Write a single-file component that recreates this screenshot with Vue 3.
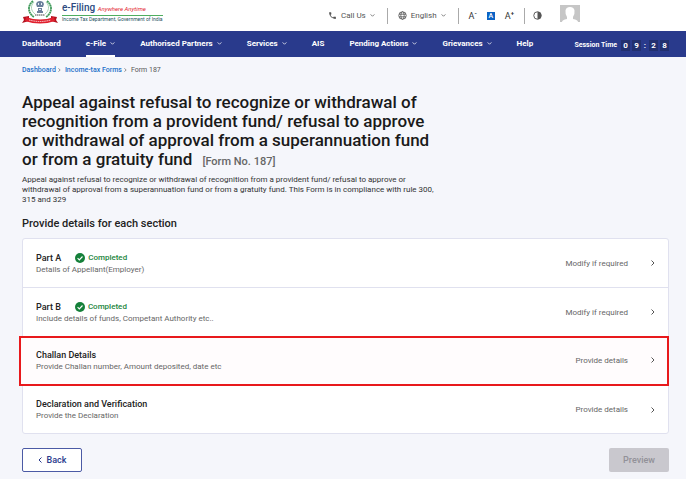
<template>
    <div class="page">
        <header class="topbar">
            <a href="#" class="brand">
                <svg class="emblem" viewBox="0 0 36 24" aria-hidden="true">
                    <path d="M11 1C5 6 6 13 12 17" fill="none" stroke="#3f9a5a" stroke-width="1.8" stroke-dasharray="2 .4" />
                    <path d="M25 1c6 5 5 12-1 16" fill="none" stroke="#3f9a5a" stroke-width="1.8" stroke-dasharray="2 .4" />
                    <path d="M12 2c-4 4-3 9 1 12M24 2c4 4 3 9-1 12" fill="none" stroke="#a9d3b4" stroke-width="1" />
                    <path d="M15 2q3-2 6 0l1 2-1 3h-6l-1-3zM16 8h4v3h-4zM15 11h6v2h-6z" fill="#6b7f9c" />
                    <path d="M16 3h1v2h-1zM19 3h1v2h-1zM17 9h2v1h-2z" fill="#e8edf3" />
                    <path d="M13 15h10" stroke="#444" stroke-width="1" stroke-dasharray="1.5 .5" />
                    <path d="M1 17l6-1v5l-7 2 2-3zM35 17l-6-1v5l7 2-2-3z" fill="#b3121f" />
                    <path d="M4 17q14 5 28 0l1 4q-15 5-30 0z" fill="#e01f2d" />
                    <path d="M7 20q11 3 22 0" fill="none" stroke="#fff" stroke-width=".8" stroke-dasharray="1.5 .7" />
                </svg>
                <span class="brand-text">
                    <span class="brand-name">e-Filing <em>Anywhere Anytime</em></span>
                    <span class="brand-dept">Income Tax Department, Government of India</span>
                </span>
            </a>

            <div class="tools">
                <button class="tool call">
                    <svg class="icon" viewBox="0 0 24 24"><path d="M6.6 10.8c1.4 2.8 3.8 5.1 6.6 6.6l2.2-2.2c.3-.3.7-.4 1-.2 1.1.4 2.3.6 3.6.6.6 0 1 .4 1 1V20c0 .6-.4 1-1 1C10.6 21 3 13.4 3 4c0-.6.4-1 1-1h3.5c.6 0 1 .4 1 1 0 1.2.2 2.5.6 3.6.1.3 0 .7-.2 1z" fill="currentColor" /></svg>
                    <span>Call Us</span>
                    <svg class="caret" viewBox="0 0 6 4"><path d="M.5.5L3 3 5.5.5" /></svg>
                </button>
                <button class="tool language">
                    <svg class="icon" viewBox="0 0 24 24" fill="none" stroke="currentColor" stroke-width="2.2"><circle cx="12" cy="12" r="10" /><ellipse cx="12" cy="12" rx="4.5" ry="10" /><path d="M3 8.5h18M3 15.5h18" /></svg>
                    <span>English</span>
                    <svg class="caret" viewBox="0 0 6 4"><path d="M.5.5L3 3 5.5.5" /></svg>
                </button>
                <div class="font-tools">
                    <button class="size" aria-label="Decrease text size">A<sup>-</sup></button>
                    <button class="size active" aria-label="Normal text size">A</button>
                    <button class="size" aria-label="Increase text size">A<sup>+</sup></button>
                </div>
                <button class="tool contrast" aria-label="Contrast">
                    <svg class="icon" viewBox="0 0 24 24"><circle cx="12" cy="12" r="10" fill="none" stroke="currentColor" stroke-width="2.5" /><path d="M12 2a10 10 0 0 1 0 20z" fill="currentColor" /></svg>
                </button>
                <button class="avatar" aria-label="Profile">
                    <svg viewBox="0 0 20 17"><path d="M0 0h20v17H0z" fill="#c6c6c6" /><path d="M2 17q0-2 5-3v-2Q5 9 5.5 5.5 6 2 10 2t4.5 3.5Q15 9 13 12v2q5 1 5 3z" fill="#fff" /></svg>
                </button>
            </div>
        </header>

        <nav class="navbar">
            <a v-for="item in menu" :key="item.label" href="#" class="nav-link" :class="{ current: item.current }">
                {{ item.label }}
                <svg v-if="item.sub" class="caret" viewBox="0 0 6 4"><path d="M.5.5L3 3 5.5.5" /></svg>
            </a>
            <div class="session">
                <span class="session-label">Session Time</span>
                <span class="digit">0</span>
                <span class="digit">9</span>
                <span class="colon">:</span>
                <span class="digit">2</span>
                <span class="digit">8</span>
            </div>
        </nav>

        <main class="content">
            <div class="breadcrumb">
                <a href="#">Dashboard</a>
                <svg class="crumb-arrow" viewBox="0 0 4 6"><path d="M.5.5L3 3 .5 5.5" /></svg>
                <a href="#">Income-tax Forms</a>
                <svg class="crumb-arrow" viewBox="0 0 4 6"><path d="M.5.5L3 3 .5 5.5" /></svg>
                <span>Form 187</span>
            </div>

            <h1>
                Appeal against refusal to recognize or withdrawal of recognition from a provident fund/
                refusal to approve or withdrawal of approval from a superannuation fund
                <span>or from a gratuity fund</span>
                <small>[Form No. 187]</small>
            </h1>
            <p class="description">
                Appeal against refusal to recognize or withdrawal of recognition from a provident fund/ refusal to approve or<br>
                withdrawal of approval from a superannuation fund or from a gratuity fund. This Form is in compliance with rule 300,<br>
                315 and 329
            </p>

            <h2>Provide details for each section</h2>

            <div class="sections">
                <a v-for="section in sections" :key="section.title" href="#" class="section" :class="{ highlight: section.highlight }">
                    <div class="section-info">
                        <div class="section-head">
                            <h3>{{ section.title }}</h3>
                            <span v-if="section.done" class="status">
                                <svg viewBox="0 0 10 10"><circle cx="5" cy="5" r="5" fill="#15803a" /><path d="M2.6 5.2l1.7 1.7 3.2-3.4" fill="none" stroke="#fff" stroke-width="1.1" /></svg>
                                Completed
                            </span>
                        </div>
                        <p>{{ section.text }}</p>
                    </div>
                    <span class="section-action">{{ section.done ? 'Modify if required' : 'Provide details' }}</span>
                    <svg class="chevron" viewBox="0 0 4 6"><path d="M.5.5L3 3 .5 5.5" /></svg>
                </a>
            </div>

            <div class="actions">
                <button class="back-btn">
                    <svg viewBox="0 0 4 6"><path d="M3.5.5L1 3l2.5 2.5" /></svg>
                    Back
                </button>
                <button class="preview-btn" disabled>Preview</button>
            </div>
        </main>
    </div>
</template>

<script setup>
    import { ref } from 'vue';

    const menu = [
        { label: 'Dashboard' },
        { label: 'e-File', sub: true, current: true },
        { label: 'Authorised Partners', sub: true },
        { label: 'Services', sub: true },
        { label: 'AIS' },
        { label: 'Pending Actions', sub: true },
        { label: 'Grievances', sub: true },
        { label: 'Help' }
    ];

    const sections = ref([
        { title: 'Part A', text: 'Details of Appellant(Employer)', done: true },
        { title: 'Part B', text: 'Include details of funds, Competant Authority etc..', done: true },
        { title: 'Challan Details', text: 'Provide Challan number, Amount deposited, date etc', highlight: true },
        { title: 'Declaration and Verification', text: 'Provide the Declaration' }
    ]);
</script>

<style>
    body {
        margin: 0;
        background: #f5f6fb;
    }
</style>

<style scoped>
    * {
        box-sizing: border-box;
    }

    .page {
        font-family: Roboto, "Liberation Sans", sans-serif;
        font-size: 8px;
        color: #222;
    }

    a {
        text-decoration: none;
    }

    button {
        font-family: inherit;
        border: none;
        background: none;
        padding: 0;
        cursor: pointer;
    }

    h1, h2, h3, p {
        margin: 0;
        font-weight: 500;
    }

    .topbar {
        display: flex;
        justify-content: space-between;
        height: 31px;
        padding: 0 106px 0 22px;
        background: #fff;
    }

    .brand {
        display: flex;
        gap: 4px;
    }

    .emblem {
        width: 36px;
        height: 24px;
    }

    .brand-text {
        display: flex;
        flex-direction: column;
        padding-top: 2px;
    }

    .brand-name {
        font-size: 10px;
        line-height: 12px;
        font-weight: 500;
        color: #2b4a80;
        border-bottom: 1px solid #4fae5f;
        white-space: nowrap;
    }

        .brand-name em {
            font-size: 6px;
            font-weight: 400;
            color: #e3262f;
        }

    .brand-dept {
        font-size: 5px;
        line-height: 7px;
        font-weight: 400;
        color: #1f5262;
        white-space: nowrap;
    }

    .tools {
        display: flex;
        align-items: center;
        color: #555;
    }

    .tool {
        display: flex;
        align-items: center;
        gap: 4px;
        height: 16px;
        font-size: 8px;
        color: #555;
        white-space: nowrap;
    }

    .icon {
        width: 9px;
        height: 9px;
    }

    .caret {
        width: 5px;
        height: 3px;
        fill: none;
        stroke: currentColor;
    }

    .call {
        padding-right: 12px;
        border-right: 1px solid #aaa;
    }

    .language {
        padding: 0 12px 0 10px;
        border-right: 1px solid #aaa;
    }

    .font-tools {
        display: flex;
        align-items: center;
        gap: 10px;
        height: 16px;
        padding: 0 10px;
        border-right: 1px solid #aaa;
    }

    .size {
        font-size: 9px;
        line-height: 8px;
        color: #333;
    }

        .size sup {
            font-size: 6px;
            font-weight: 700;
            line-height: 4px;
        }

        .size.active {
            width: 8px;
            font-size: 7px;
            font-weight: 500;
            background: #0b63c4;
            color: #fff;
        }

    .contrast {
        padding: 0 18px 0 8px;
    }

    .avatar {
        align-self: flex-start;
        padding-top: 5px;
    }

        .avatar svg {
            display: block;
            width: 20px;
            height: 17px;
        }

    .navbar {
        display: flex;
        align-items: stretch;
        gap: 25px;
        height: 26px;
        padding: 0 17px 0 22px;
        background: #293a8c;
        color: #fff;
    }

    .nav-link {
        display: flex;
        align-items: center;
        gap: 4px;
        border-bottom: 2px solid transparent;
        color: #fff;
        font-weight: 700;
        white-space: nowrap;
    }

        .nav-link.current {
            border-bottom-color: #fff;
        }

    .session {
        display: flex;
        align-items: center;
        gap: 2px;
        margin-left: auto;
        padding-top: 2px;
        font-weight: 700;
        white-space: nowrap;
    }

    .session-label {
        margin-right: 2px;
        font-size: 7px;
    }

    .digit {
        width: 9px;
        line-height: 11px;
        background: #22306f;
        text-align: center;
    }

    .colon {
        width: 4px;
        text-align: center;
    }

    .content {
        padding: 8px 17px 7px 22px;
    }

    .breadcrumb {
        display: flex;
        align-items: center;
        line-height: 10px;
        font-size: 7px;
        color: #555;
    }

        .breadcrumb a {
            color: #1b6fc9;
            font-weight: 500;
        }

    .crumb-arrow, .chevron {
        width: 4px;
        height: 6px;
        fill: none;
        stroke: #555;
    }

    .crumb-arrow {
        width: 3px;
        height: 4px;
        margin: 0 4px 0 2px;
    }

    h1 {
        max-width: 420px;
        margin-top: 18px;
        font-size: 17px;
        line-height: 19px;
        color: #1a1a1a;
    }

        h1 small {
            margin-left: 10px;
            font-size: 11px;
            color: #666;
        }

    .description {
        margin-top: 4px;
        font-size: 8px;
        line-height: 10px;
        font-weight: 400;
        color: #333;
        white-space: nowrap;
    }

    h2 {
        margin-top: 12px;
        font-size: 11px;
        line-height: 13px;
    }

    .sections {
        margin-top: 8px;
        border: 1px solid #e0e1ef;
        border-radius: 3px;
        background: #fff;
    }

    .section {
        display: flex;
        align-items: center;
        height: 48px;
        padding: 0 13px;
        color: #222;
    }

        .section + .section {
            height: 49px;
            border-top: 1px solid #e0e1ef;
        }

        .section + .section.highlight {
            height: 50px;
            margin: 0 -1px 0 -4px;
            padding: 0 12px 2px 15px;
            border: 2px solid #e8191c;
            background: #fffcfd;
        }

        .section.highlight + .section {
            border-top: none;
            height: 47px;
        }

    .section-info {
        flex: 1;
    }

    .section-head {
        display: flex;
        align-items: center;
        gap: 14px;
    }

    h3 {
        font-size: 9px;
        line-height: 12px;
    }

    .status {
        display: flex;
        align-items: center;
        gap: 3px;
        font-weight: 500;
        color: #1c8540;
    }

        .status svg {
            width: 10px;
            height: 10px;
        }

    .section-info p {
        font-size: 8px;
        line-height: 11px;
        font-weight: 400;
        color: #666;
    }

    .section-action {
        margin-right: 23px;
        color: #666;
    }

    .actions {
        display: flex;
        justify-content: space-between;
        margin-top: 14px;
    }

    .back-btn, .preview-btn {
        display: flex;
        align-items: center;
        justify-content: center;
        gap: 5px;
        width: 60px;
        height: 24px;
        border-radius: 2px;
        font-size: 9px;
        font-weight: 500;
    }

    .back-btn {
        border: 1px solid #4b5aa5;
        background: #fff;
        color: #293a8c;
    }

        .back-btn svg {
            width: 4px;
            height: 6px;
            fill: none;
            stroke: currentColor;
        }

    .preview-btn {
        background: #c9c8ce;
        color: #929198;
    }
</style>
